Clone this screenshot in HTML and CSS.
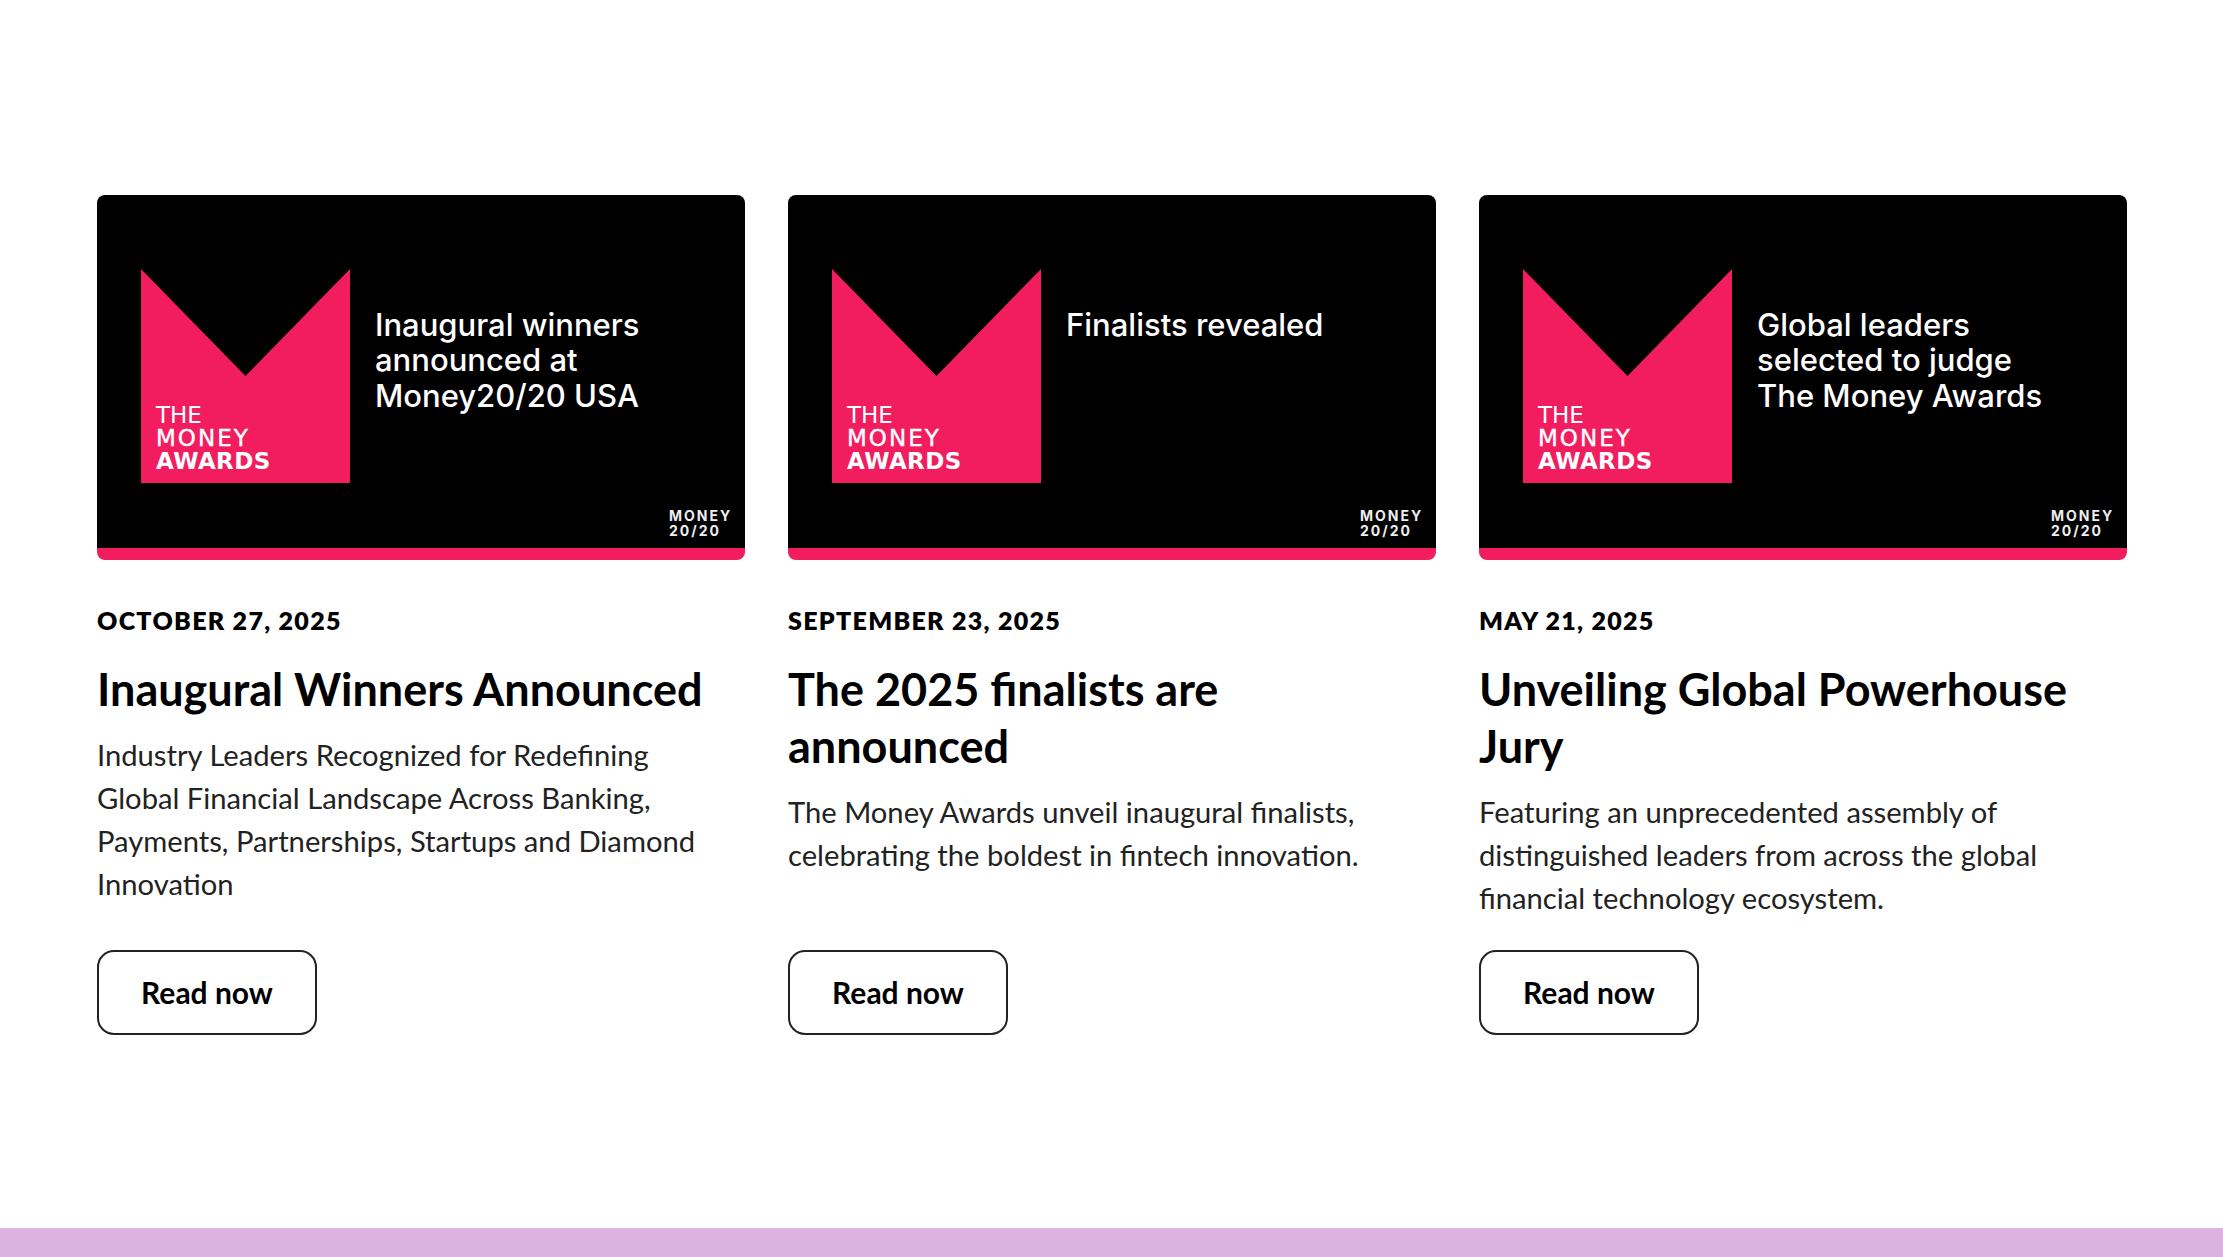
FILE: index.html
```html
<!DOCTYPE html>
<html>
<head>
    <meta charset="utf-8">
    <title>The Money Awards</title>
    <link rel="stylesheet" href="styles.css">
</head>
<body>
    <main class="news">
        <article class="card">
            <div class="banner">
                <div class="logo">
                    <span class="logo-the">THE</span>
                    <span class="logo-money">MONEY</span>
                    <span class="logo-awards">AWARDS</span>
                </div>
                <p class="banner-text">Inaugural winners<br>announced at<br>Money20/20 USA</p>
                <div class="mark">MONEY<br>20/20</div>
            </div>
            <div class="date">OCTOBER 27, 2025</div>
            <h2>Inaugural Winners Announced</h2>
            <p class="desc">Industry Leaders Recognized for Redefining Global Financial Landscape Across Banking, Payments, Partnerships, Startups and Diamond Innovation</p>
            <a class="btn" href="#">Read now</a>
        </article>
        <article class="card">
            <div class="banner">
                <div class="logo">
                    <span class="logo-the">THE</span>
                    <span class="logo-money">MONEY</span>
                    <span class="logo-awards">AWARDS</span>
                </div>
                <p class="banner-text">Finalists revealed</p>
                <div class="mark">MONEY<br>20/20</div>
            </div>
            <div class="date">SEPTEMBER 23, 2025</div>
            <h2>The 2025 finalists are announced</h2>
            <p class="desc">The Money Awards unveil inaugural finalists, celebrating the boldest in fintech innovation.</p>
            <a class="btn" href="#">Read now</a>
        </article>
        <article class="card">
            <div class="banner">
                <div class="logo">
                    <span class="logo-the">THE</span>
                    <span class="logo-money">MONEY</span>
                    <span class="logo-awards">AWARDS</span>
                </div>
                <p class="banner-text">Global leaders<br>selected to judge<br>The Money Awards</p>
                <div class="mark">MONEY<br>20/20</div>
            </div>
            <div class="date">MAY 21, 2025</div>
            <h2>Unveiling Global Powerhouse Jury</h2>
            <p class="desc">Featuring an unprecedented assembly of distinguished leaders from across the global financial technology ecosystem.</p>
            <a class="btn" href="#">Read now</a>
        </article>
    </main>
    <div class="band"></div>
</body>
</html>
```

FILE: styles.css
```css
body {
    margin: 0;
    min-height: 1257px;
    display: flex;
    flex-direction: column;
    background: #fff;
    color: #000;
    font-family: "Lato", "Liberation Sans", sans-serif;
}
.news {
    flex: 1;
    display: grid;
    grid-template-columns: repeat(3, 648px);
    column-gap: 43px;
    align-content: start;
    padding: 195px 96px 0 97px;
}
.card {
    display: flex;
    flex-direction: column;
    align-items: flex-start;
    height: 840px;
}
.banner {
    position: relative;
    box-sizing: border-box;
    width: 100%;
    height: 365px;
    padding: 74px 0 0 44px;
    display: flex;
    gap: 25px;
    background: #000;
    border-bottom: 12px solid #f21d5e;
    border-radius: 8px;
}
.logo {
    box-sizing: border-box;
    width: 209px;
    height: 214px;
    padding: 0 0 10px 15px;
    display: flex;
    flex-direction: column;
    justify-content: flex-end;
    background: #f21d5e;
    clip-path: polygon(0 0, 50% 50%, 100% 0, 100% 100%, 0 100%);
    color: #fff;
    font-family: "DejaVu Sans", sans-serif;
    font-size: 23px;
    line-height: 23px;
}
.logo-the {
    font-weight: 400;
}
.logo-money {
    font-weight: 400;
    letter-spacing: 2px;
    -webkit-text-stroke: 0.4px #fff;
}
.logo-awards {
    font-weight: 700;
    letter-spacing: 0.4px;
}
.banner-text {
    margin: 38px 0 0;
    color: #fff;
    font-family: "Inter", sans-serif;
    font-size: 31px;
    font-weight: 500;
    line-height: 35.4px;
}
.mark {
    position: absolute;
    right: 10px;
    bottom: 10px;
    width: 66px;
    color: #eee;
    font-family: "Inter", sans-serif;
    font-size: 14px;
    font-weight: 700;
    line-height: 14.5px;
    letter-spacing: 2px;
}
.date {
    margin-top: 45px;
    font-size: 25px;
    line-height: 30px;
    font-weight: 800;
    letter-spacing: 1.3px;
}
h2 {
    margin: 26px 0 0;
    font-size: 45px;
    line-height: 57px;
    font-weight: 700;
}
.desc {
    margin: 15px 0 0;
    max-width: 625px;
    color: #222;
    font-size: 29.2px;
    line-height: 43px;
}
.btn {
    box-sizing: border-box;
    margin-top: auto;
    width: 220px;
    height: 85px;
    padding-bottom: 2px;
    display: flex;
    align-items: center;
    justify-content: center;
    border: 2px solid #222;
    border-radius: 17px;
    color: #000;
    font-size: 30px;
    font-weight: 700;
    text-decoration: none;
}
.band {
    height: 29px;
    background: #dcb3e0;
}
```
